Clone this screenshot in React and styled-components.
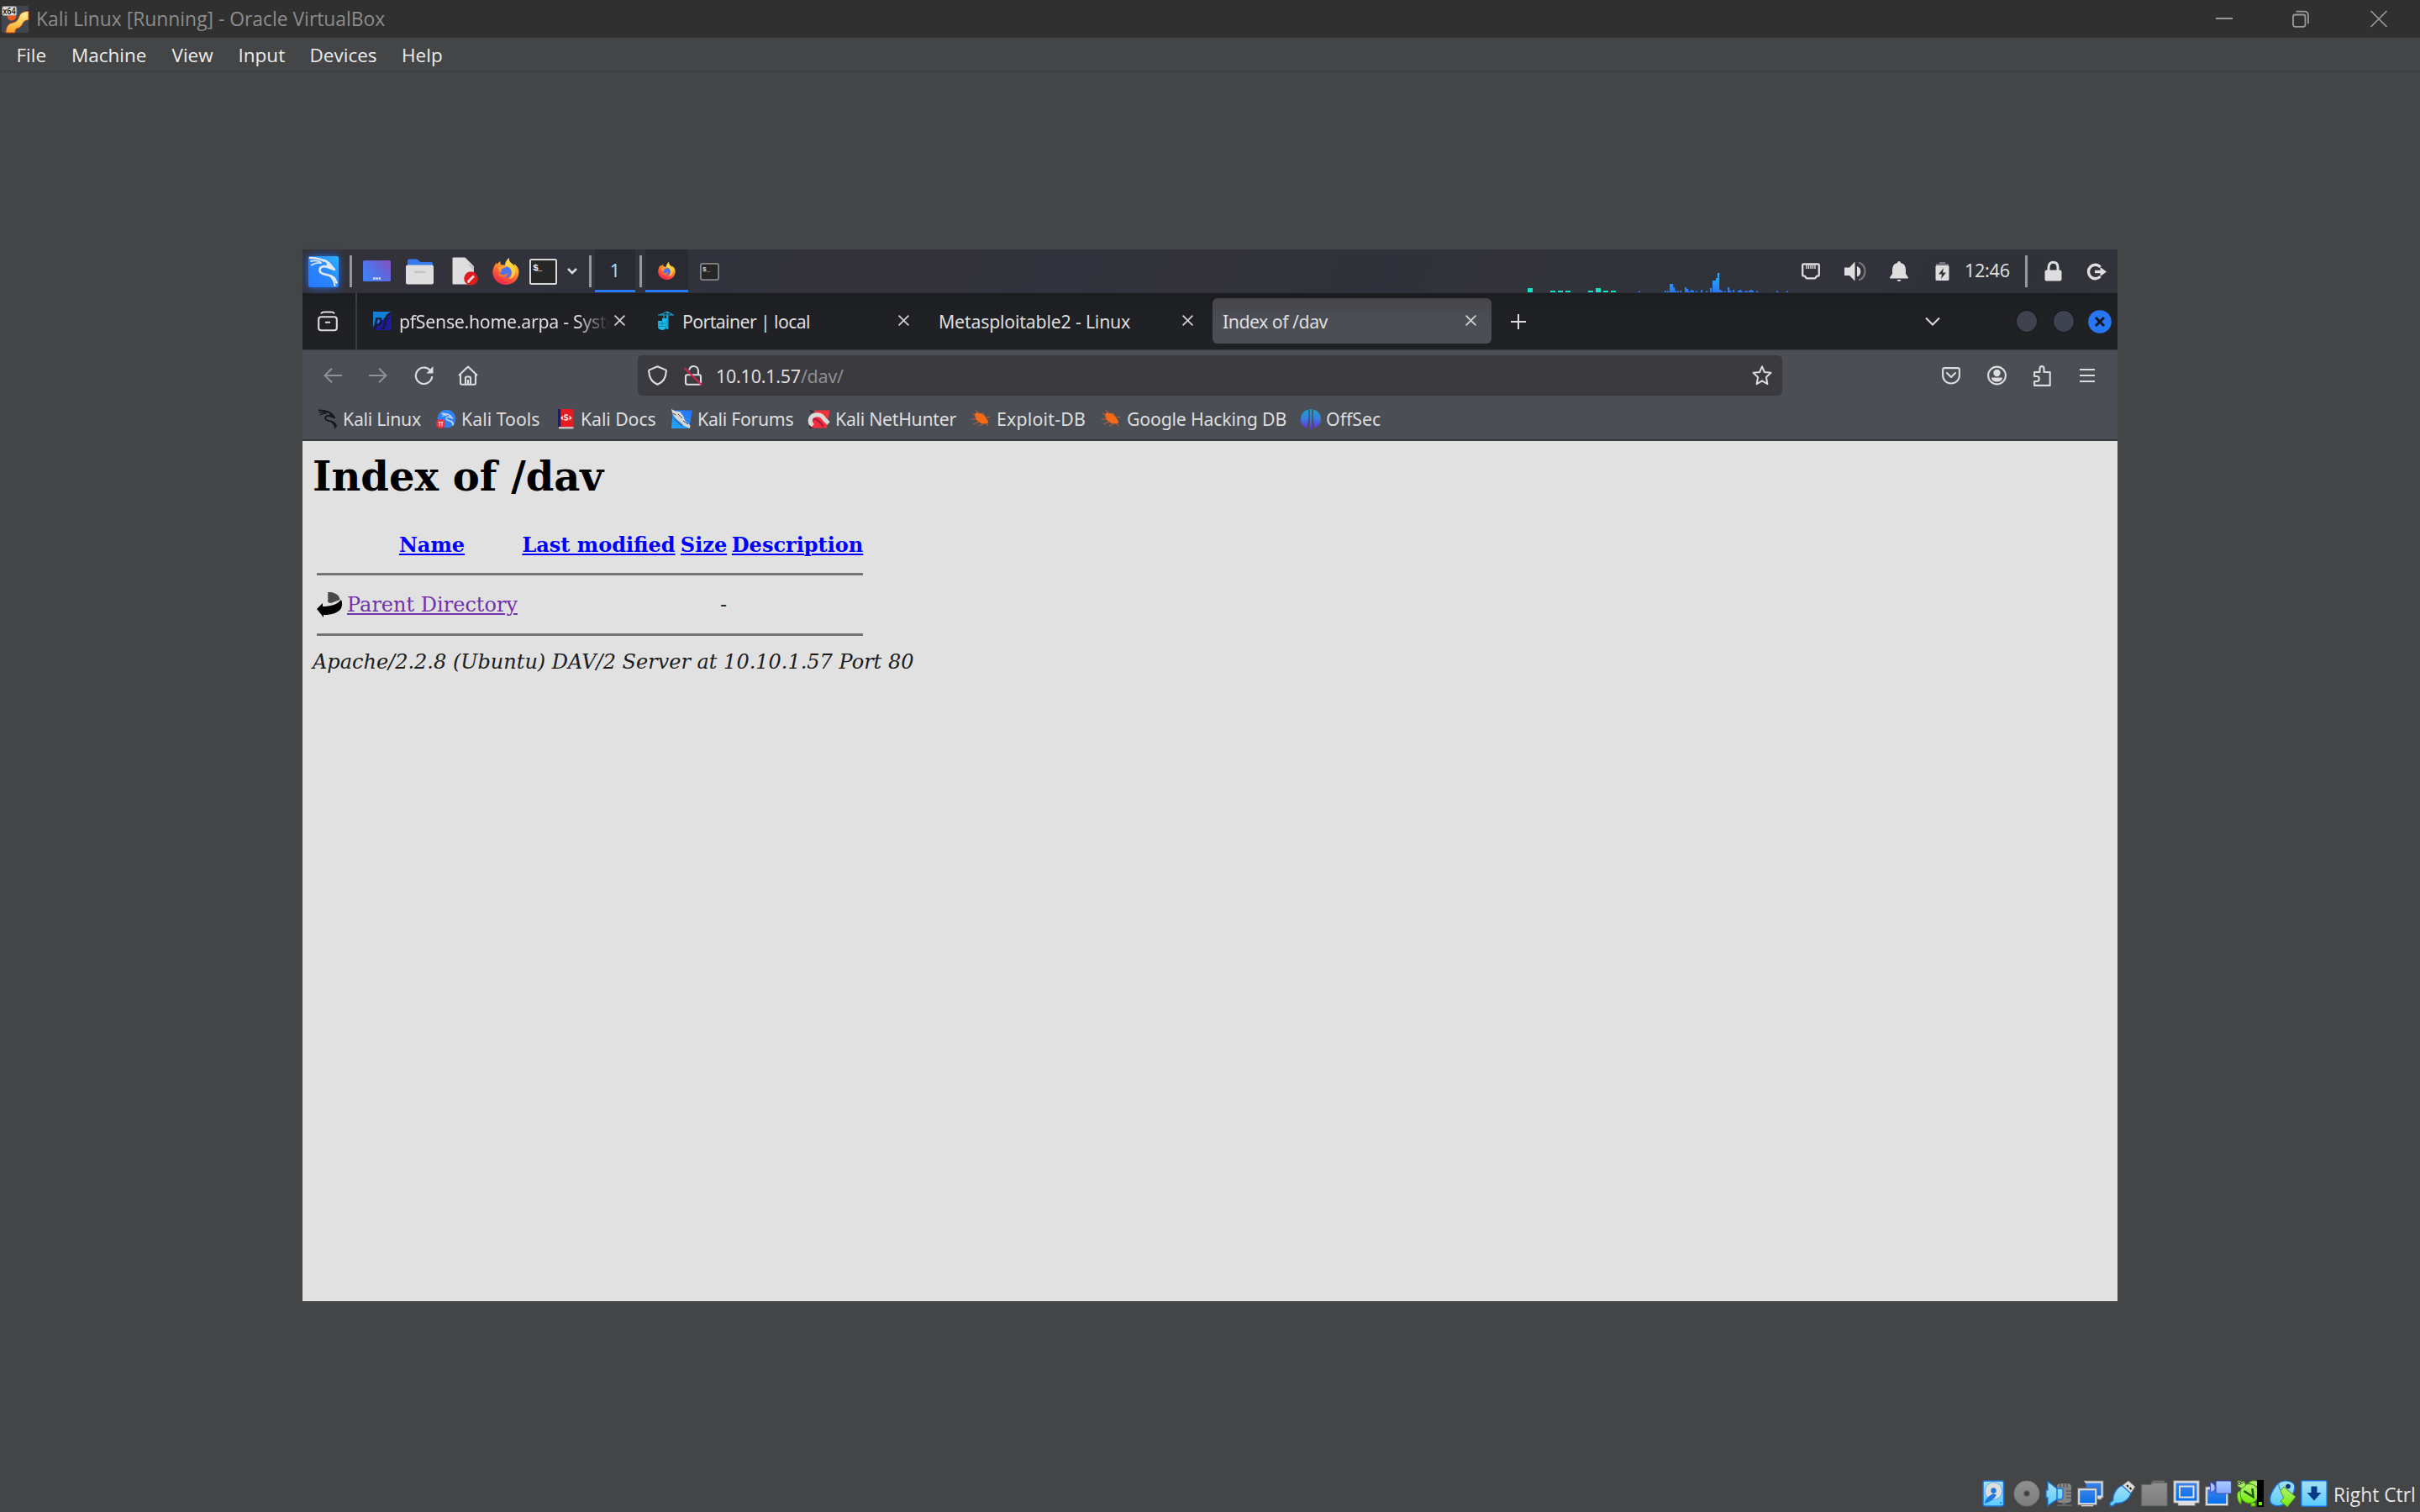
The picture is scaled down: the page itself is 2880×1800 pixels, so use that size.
import React from "react";
import styled, { createGlobalStyle } from "styled-components";

const GlobalStyle = createGlobalStyle`
  * { box-sizing: border-box; }
  html, body, #root { margin: 0; height: 100%; }
  body { background: #444546; overflow: hidden; }
  svg { display: block; overflow: visible; flex: none; }
`;

const hostFont = `"Open Sans", "Noto Sans", sans-serif`;
const guestFont = `"Noto Sans", "Open Sans", sans-serif`;

const Desktop = styled.div`
  width: 2880px;
  height: 1800px;
  display: flex;
  flex-direction: column;
  background: #444546;
`;

const Item = styled.div`
  flex: none;
  display: flex;
  align-items: center;
  width: ${(p) => p.$w}px;
  margin-left: ${(p) => p.$gap || 0}px;
`;
const Spacer = styled.div`
  flex: 1;
`;

/* ---------- host window ---------- */
const TitleBar = styled.header`
  height: 45px;
  flex: none;
  display: flex;
  align-items: center;
  padding: 0 39px 0 2px;
  background: #303030;
`;
const TitleText = styled.span`
  margin-left: 9px;
  font: 22.85px/47px ${hostFont};
  color: #8c8c8c;
  white-space: nowrap;
`;
const MenuBar = styled.nav`
  height: 41px;
  flex: none;
  display: flex;
  padding-left: 19.5px;
  border-bottom: 2px solid #3e3f40;
`;
const MenuEntry = styled.span`
  flex: none;
  width: ${(p) => p.$w}px;
  font: 22.5px/42px ${hostFont};
  color: #ececec;
  white-space: nowrap;
`;
const Stage = styled.main`
  flex: 1;
  display: flex;
  justify-content: center;
  align-items: flex-start;
  padding-top: 211px;
`;
const StatusBar = styled.footer`
  height: 44px;
  flex: none;
  display: flex;
  align-items: center;
  justify-content: flex-end;
  gap: 6px;
  padding: 0 3px 0 0;
`;
const HostKey = styled.span`
  width: 101px;
  padding: 4px 0 0 1px;
  font: 22.8px/44px ${hostFont};
  color: #e6e6e6;
  white-space: nowrap;
`;

/* ---------- guest screen ---------- */
const Guest = styled.section`
  width: 2160px;
  height: 1252px;
  display: flex;
  flex-direction: column;
  background: #e1e1e1;
  font-family: ${guestFont};
  color: #dcdcdc;
`;
const Panel = styled.div`
  height: 52px;
  flex: none;
  display: flex;
  align-items: center;
  padding: 0 13px 0 7px;
  background: linear-gradient(115deg, #33323a 0%, #32323b 9%, #2f333b 22%, #33323b 28%, #33323b 36%, #2f333b 42%, #33323b 49%, #2f323a 60%, #33323b 66%, #2f333a 76%, #32323b 84%, #2f3239 92%, #32323a 100%);
`;
const Separator = styled.i`
  flex: none;
  width: 3px;
  height: 38px;
  margin-left: ${(p) => p.$gap}px;
  background: #98989b;
`;
const Task = styled.div`
  flex: none;
  width: ${(p) => p.$w}px;
  height: 52px;
  margin-left: 4.5px;
  display: flex;
  align-items: center;
  justify-content: center;
  padding-bottom: 1px;
  background: #2a2b32;
  border-bottom: 1px solid #303138;
  box-shadow: inset 0 -3px 0 #2b7bf5;
  color: #a9d5f5;
  font: 21.5px/48px ${guestFont};
`;
const Clock = styled.span`
  flex: none;
  width: 54px;
  margin-left: 18px;
  font: 21.6px/48px ${guestFont};
  letter-spacing: -0.3px;
  padding-bottom: 3px;
  color: #dedede;
  white-space: nowrap;
`;

const TabStrip = styled.div`
  height: 68px;
  flex: none;
  display: flex;
  align-items: center;
  padding: 0 7px 0 18px;
  background: linear-gradient(#1c1d20, #202125 45%);
  border-bottom: 1px solid #3c3e44;
`;
const StripDivider = styled.i`
  flex: none;
  align-self: stretch;
  width: 2px;
  margin-left: 20.5px;
  background: #3d3e42;
`;
const Tab = styled.div`
  flex: none;
  display: flex;
  align-items: center;
  width: 332px;
  height: 54px;
  margin: 0 0 2px ${(p) => p.$gap}px;
  padding: 0 18px 0 ${(p) => p.$pad}px;
  border-radius: 6px;
  background: ${(p) => (p.$active ? "linear-gradient(#454549, #4c4e56 50%)" : "transparent")};
`;
const TabLabel = styled.span`
  flex: 1;
  min-width: 0;
  overflow: hidden;
  margin-left: ${(p) => p.$gap || 0}px;
  padding-top: 2px;
  font-size: 21.3px;
  line-height: 40px;
  letter-spacing: ${(p) => p.$track || 0}px;
  white-space: nowrap;
  color: #dedede;
  ${(p) => p.$fade && "mask-image: linear-gradient(90deg, #000 83%, transparent 98%);"}
`;
const WindowDot = styled.i`
  flex: none;
  width: 24px;
  height: 25px;
  margin-left: ${(p) => p.$gap}px;
  border-radius: 50%;
  background: #3f4350;
  box-shadow: 0 0 0 1px #17181b;
`;

const NavBar = styled.div`
  height: 60px;
  flex: none;
  display: flex;
  align-items: center;
  padding: 0 27px 0 25px;
  background: #4c4e56;
`;
const UrlField = styled.div`
  flex: none;
  display: flex;
  align-items: center;
  width: 1362px;
  height: 48px;
  margin-left: 190px;
  padding: 0 12px 0 12px;
  border-radius: 6px;
  background: #3a3a3f;
`;
const Url = styled.span`
  flex: 1;
  margin-left: 16px;
  padding-top: 1px;
  font-size: 21.5px;
  line-height: 48px;
  letter-spacing: -0.25px;
  color: #dedede;
`;
const UrlPath = styled.span`
  color: #8f8f92;
`;

const BookmarkBar = styled.div`
  height: 48px;
  flex: none;
  display: flex;
  align-items: center;
  padding: 0 0 2px 18px;
  background: #4c4e56;
  border-bottom: 2px solid #36373c;
`;
const Bookmark = styled.div`
  flex: none;
  display: flex;
  align-items: center;
  gap: 6px;
  width: ${(p) => p.$w}px;
  font-size: 21.3px;
  line-height: 40px;
  letter-spacing: ${(p) => p.$track || 0}px;
  white-space: nowrap;
  color: #dedede;
`;

/* ---------- page ---------- */
const Page = styled.article`
  flex: 1;
  padding: 13.5px 12px;
  font: 24px/28px "DejaVu Serif", serif;
  color: #000;
`;
const Heading = styled.h1`
  margin: 0;
  font-size: 48px;
  line-height: 56px;
  font-weight: bold;
`;
const Listing = styled.div`
  width: 650px;
  margin: 36px 0 0 5px;
`;
const Row = styled.div`
  display: grid;
  grid-template-columns: 30px 202px 183px 55px 156px;
  column-gap: 6px;
  align-items: center;
  height: ${(p) => p.$h}px;
  padding-top: ${(p) => p.$top || 0}px;
`;
const HeadCell = styled.a`
  grid-column: ${(p) => p.$col};
  justify-self: center;
  font-weight: bold;
  white-space: nowrap;
  color: #0000ff;
  text-decoration: underline;
`;
const Visited = styled.a`
  color: #7230ad;
  white-space: nowrap;
  text-decoration: underline;
`;
const SizeCell = styled.span`
  grid-column: 4;
  justify-self: end;
  color: #222;
`;
const Rule = styled.hr`
  height: 3px;
  margin: ${(p) => p.$gap || 0}px 0 0;
  border: 0;
  background: linear-gradient(#8b8b8b, #6b6b6b 40%, #757575);
`;
const Address = styled.address`
  margin-top: 17px;
  font-style: italic;
  color: #1c1c1c;
  white-space: nowrap;
`;

/* ---------- drawings ---------- */
const line = "#dcdcdc";
const S = ({ w, h, vb, children, ...r }) => (
  <svg width={w} height={h} viewBox={vb || `0 0 ${w} ${h}`} fill="none" {...r}>{children}</svg>
);

const VBoxLogo = () => (
  <S w={32} h={32}>
    <defs><linearGradient id="vb" x1="0" y1="0" x2="0" y2="1"><stop stopColor="#fff0a8" /><stop offset=".5" stopColor="#ffcf5c" /><stop offset="1" stopColor="#f99b2a" /></linearGradient></defs>
    <rect width="32" height="32" rx="1" fill="#404650" />
    <circle cx="12" cy="12" r="5.5" fill="#f0571a" />
    <path d="M5 32c0-7 3-11 8-12 5-1 6-3 8-8 2-4 5-5.500 11-5.500V17c-5 0-6 2-8 6-2 3-4 3.500-6 4-1.500.5-2 2-2 5z" fill="url(#vb)" stroke="#c8400f" strokeWidth="1" />
    <rect x=".7" y=".7" width="17" height="10.800" rx="2" fill="#dcdcdc" stroke="#8f8f8f" strokeWidth=".7" />
    <text x="1.300" y="9.800" fontSize="10" fontFamily="Open Sans, sans-serif" fontWeight="600" fill="#111" textLength="15.500" lengthAdjust="spacingAndGlyphs">x64</text>
  </S>
);
const WinMin = () => <S w={20} h={20}><path d="M0 9h20" stroke="#9a9a9a" strokeWidth="2" /></S>;
const WinRestore = () => (
  <S w={20} h={20} stroke="#9a9a9a" strokeWidth="1.800">
    <rect x="1" y="4.500" width="14.500" height="14.300" rx="2.500" />
    <path d="M4.500.7h9.500c3.500 0 5 1.500 5 5v9.500" />
  </S>
);
const WinClose = () => <S w={20} h={20}><path d="M.5 0l19 19M19.500 0l-19 19" stroke="#9a9a9a" strokeWidth="1.700" /></S>;

const Dragon = ({ c, sw = 2.6 }) => (
  <g stroke={c} strokeWidth={sw} strokeLinecap="round" strokeLinejoin="round" fill="none">
    <path d="M2 2c6 0 12 1 16 3.500" /><path d="M3 6c4-1 8-.5 11 .5M4 10.500c3-2 7-3 11-2.500" strokeWidth={sw * 0.7} />
    <path d="M17 4.500c6 1 9 5 14 11.500l-8-3c-5-2-9-.5-9.500 3C13 21 19 21.500 24 22.500c5 1 8 4 9.500 9" />
    <path d="M25 23c4 3 6 7 6.500 12" strokeWidth={sw * 0.8} />
    <path d="M22 8.500l9 7-8-2.500z" fill={c} strokeWidth={sw * 0.4} />
  </g>
);
const LogoGlow = styled(S)`
  filter: drop-shadow(0 0 5px #1a6cf0);
`;
const KaliLogo = () => (
  <LogoGlow w={36} h={37}>
    <defs><linearGradient id="kl" x1="0" y1="1" x2="1" y2="0"><stop stopColor="#2777ff" /><stop offset=".5" stopColor="#2a86ff" /><stop offset="1" stopColor="#2bb4ff" /></linearGradient></defs>
    <rect width="36" height="37" rx="2" fill="url(#kl)" />
    <Dragon c="#e4e8ee" />
  </LogoGlow>
);
const DesktopIcon = () => (
  <S w={33} h={26}>
    <defs><linearGradient id="dk" x1="0" y1=".7" x2="1" y2="0"><stop stopColor="#3f80f8" /><stop offset=".55" stopColor="#5f68dc" /><stop offset="1" stopColor="#8a4fbc" /></linearGradient></defs>
    <rect width="33" height="25" rx="1.500" fill="url(#dk)" />
    <path d="M12 21.500h2.500M15.300 21.500h2.500M18.600 21.500h2.500" stroke="#dde" strokeWidth="2.500" />
  </S>
);
const FolderIcon = () => (
  <S w={33} h={31}>
    <path d="M2 2.500C2 1 3 .5 4 .5h9c2 0 3 3.500 5 3.500h12c1 0 2 .5 2 2v6H2z" fill="#3579ea" />
    <rect y="7.500" width="33" height="23" rx="2" fill="#dedede" />
    <rect x="9.500" y="14.500" width="14" height="2.500" rx="1" fill="#c4c4c4" />
  </S>
);
const EditorIcon = () => (
  <S w={31} h={34}>
    <path d="M1.500.5h14L26 11v21.500H1.500C.8 32.500.5 32 .5 31.500v-30c0-.6.4-1 1-1z" fill="#dedede" />
    <path d="M18 7.500L26 11v6z" fill="#c2c2c2" />
    <circle cx="22.500" cy="25.500" r="8.300" fill="#e01b1f" />
    <path d="M19 29.500l7-7" stroke="#f0dada" strokeWidth="3" /><path d="M18.500 30.200l2-.5" stroke="#fff" strokeWidth="1.500" />
  </S>
);
const FirefoxIcon = ({ size = 32, id }) => (
  <S w={size} h={size} vb="0 0 32 32">
    <defs>
      <linearGradient id={id} x1=".8" y1="0" x2=".3" y2="1"><stop stopColor="#ffe94a" /><stop offset=".35" stopColor="#ffa928" /><stop offset=".65" stopColor="#ff5a38" /><stop offset="1" stopColor="#f0204f" /></linearGradient>
    </defs>
    <path d="M20 0c-.5 4 1 5 3.500 7 1 .8 2 1.500 2.700 2.500.2-.7 0-1.700-.2-2.500C31 11 32 15 31.300 19 30 27 24 32 16 32S.5 26 .3 17.500C.2 13 2 9 5 5.500c0 1 .2 1.600.6 2.200C7 6 8 5 9.500 4c-.2 2 .2 3.500 1 4.500 1.500 0 3-.3 4.500.3C15.500 5 17 2 20 0z" fill={`url(#${id})`} />
    <path d="M20 0c-.5 4 1 5 3.500 7 4 3.500 5 8 3 13-1 3-4 5-7 5 5-4 4-10 0-12-2-1.200-4-2-4.500-4C15.500 5 17 2 20 0z" fill="#ffd94a" opacity=".8" />
    <circle cx="16" cy="17" r="6.800" fill="#4c74f0" />
    <path d="M10.500 8.500c3 .2 5 .8 6 2-1.500 1.500-3.500 1.500-5 2.500-1.500 1.200-.5 3-1.500 4.500-2-1-4-3.500-3.500-6z" fill="#ff9a30" />
    <path d="M7 16c2 4 5 5 8 3.500 2-.8 3-1.500 4-1.200-1.500 3.500-4 6-8 5-3-1-4.500-4-4-7.300z" fill="#ff6e33" />
  </S>
);
const TerminalIcon = () => (
  <S w={33} h={31}>
    <rect x="1" y="1" width="31" height="29" rx="1.500" fill="#262626" stroke="#d8d8d8" strokeWidth="2" />
    <text x="4" y="14" fontFamily="Liberation Mono, monospace" fontWeight="bold" fontSize="11.500" fill="#f0f0f0" textLength="11.500">$_</text>
  </S>
);
const TerminalSmall = () => (
  <S w={23} h={21}>
    <rect x=".9" y=".9" width="21.200" height="19.200" rx="2" fill="#262626" stroke="#858585" strokeWidth="1.800" />
    <text x="3" y="9.500" fontFamily="Liberation Mono, monospace" fontWeight="bold" fontSize="8" fill="#d0d0d0">$_</text>
  </S>
);
const teal = [[6, 5], [33, 2], [42, 2], [51, 2], [78, 2], [87, 5], [96, 2], [105, 2]];
const blue = [[138, 1.5], [169, 2], [172, 1.5], [175, 10], [177, 10], [179, 6], [181, 2], [184, 1.5], [187, 2], [193, 6], [195, 4], [197, 1.5], [200, 3], [202, 2], [206, 1.5], [212, 3], [218, 1.5], [223, 5], [226, 14], [228, 14], [230, 17], [232, 23], [234, 3], [236, 2], [240, 1.5], [244, 6], [246, 2], [250, 3], [256, 2], [258, 3], [260, 1.5], [264, 1.5], [266, 1.5], [269, 2], [271, 3], [273, 2], [278, 1.5], [302, 1.5], [314, 1.5]];
const Graph = () => (
  <S w={325} h={52}>
    <defs><linearGradient id="gr" gradientUnits="userSpaceOnUse" x1="0" y1="28" x2="0" y2="51"><stop stopColor="#22b4ff" /><stop offset="1" stopColor="#2b76f5" /></linearGradient></defs>
    {teal.map(([x, h]) => <rect key={x} x={x} y={51 - h} width="6" height={h} fill="#19e0c8" />)}
    {blue.map(([x, h]) => <rect key={x} x={x} y={51 - h} width="2.200" height={h} fill="url(#gr)" />)}
  </S>
);
const Ethernet = () => (
  <S w={22} h={20}>
    <path d="M2.500 1.300h17c.8 0 1.300.5 1.300 1.300v11.800c0 .8-.4 1.200-1.300 1.200h-1c-.8 0-1 .4-1.300 1.200-.3 1-.8 1.500-1.700 1.500h-9c-1 0-1.400-.5-1.700-1.500-.3-.8-.6-1.200-1.300-1.200h-1c-.9 0-1.300-.4-1.300-1.200V2.600c0-.8.5-1.300 1.300-1.300z" stroke="#dedede" strokeWidth="2.300" />
    <path d="M6 2v5M8.500 2v5M11 2v5M13.500 2v5M16 2v5" stroke="#dedede" strokeWidth="1.400" />
  </S>
);
const Volume = () => (
  <S w={26} h={24}>
    <path d="M0 7.500h6L12.500.5v23L6 17H0z" fill="#dedede" />
    <path d="M15 6a6 6.500 0 0 1 0 12.500z" fill="#dedede" />
    <path d="M17 1.500c4.500 1 7.500 5.500 7.500 10.500S21.500 21.500 17 22.500" stroke="#74747a" strokeWidth="2.300" />
  </S>
);
const Bell = () => (
  <S w={22} h={24}>
    <path d="M11 0c1.200 0 2 .8 2 2 4 .8 6 4 6 8.500V15l2.800 4v1.500H.2V19L3 15v-4.500C3 6 5 2.800 9 2c0-1.200.8-2 2-2zM8.500 22h5c-.5 1.300-1.300 2-2.500 2s-2-.7-2.500-2z" fill="#dedede" />
  </S>
);
const Battery = () => (
  <S w={17} h={22}>
    <path d="M5 0h7v2h4v4H1V2h4z" fill="#74747a" />
    <rect x=".5" y="4" width="16" height="18" rx="1.500" fill="#dedede" />
    <path d="M10 7l-6 7.500h4L7 20l6-7.500H9z" fill="#2f3239" />
  </S>
);
const LockIcon = () => (
  <S w={21} h={24}>
    <path d="M5 11V7.500C5 3.500 7 1.300 10.500 1.300S16 3.500 16 7.500V11" stroke="#dedede" strokeWidth="3" />
    <rect x=".5" y="10.500" width="20" height="13" rx="2" fill="#dedede" />
  </S>
);
const Logout = () => (
  <S w={23} h={21}>
    <path d="M15.500 5A8 8.300 0 1 0 15.500 16" stroke="#dedede" strokeWidth="3.400" />
    <path d="M9 8.800h6.500V5L23 10.500 15.500 16v-3.700H9z" fill="#dedede" />
  </S>
);

const FirefoxView = () => (
  <S w={24} h={24}>
    <rect x="1.200" y="6.300" width="21.600" height="16" rx="3" stroke={line} strokeWidth="2.100" />
    <path d="M4 2.300C5 1 6 .6 7.500.6h9c1.500 0 2.500.4 3.500 1.700M9 12.700h6" stroke={line} strokeWidth="2" />
  </S>
);
const PfIcon = () => (
  <S w={22} h={22}>
    <path d="M0 0h22C16 2 16 6 14 10L0 18z" fill="#1380d8" />
    <path d="M22 2v20H2c3-1 2-6 4-8z" fill="#1e1b96" />
    <text x="1" y="17" fontFamily="Open Sans, sans-serif" fontWeight="bold" fontStyle="italic" fontSize="18" fill="#151a3c">pf</text>
  </S>
);
const PortainerIcon = () => (
  <S w={20} h={22}>
    <path d="M1 4h19M3 4l9-4M12 0v6M8 3v6M12 0l7 4" stroke="#15a9d2" strokeWidth="1.200" />
    <path d="M11 5h2.500v16H11z" fill="#13a5d0" />
    <path d="M1 11h5V8h5v11c-2 4-8 3.500-10 0z" fill="#16bdeb" />
    <path d="M1 14h10M1 17.500h10M6 11v6" stroke="#12769a" strokeWidth=".8" />
  </S>
);
const TabClose = () => <S w={13} h={13}><path d="M.6.6l11.800 11.800M12.400.6L.6 12.400" stroke="#cfcfcf" strokeWidth="1.800" /></S>;
const Plus = () => <S w={18} h={18}><path d="M9 0v18M0 9h18" stroke={line} strokeWidth="2" /></S>;
const Chevron = () => <S w={18} h={10}><path d="M1 .5l8 8 8-8" stroke={line} strokeWidth="2" /></S>;
const PanelChevron = () => <S w={12} h={8}><path d="M1 1l5 5 5-5" stroke={line} strokeWidth="2.500" /></S>;
const WindowClose = () => (
  <S w={28} h={28}><circle cx="14" cy="14" r="13.800" fill="#2777f5" /><path d="M9 9l10 10M19 9L9 19" stroke="#14171f" strokeWidth="3" /></S>
);

const Arrow = ({ flip }) => (
  <S w={22} h={18}><path d={flip ? "M0 9h20.500M12 .7L20.500 9 12 17.300" : "M22 9H1.500M10 .7L1.500 9l8.500 8.300"} stroke="#909195" strokeWidth="2" /></S>
);
const Reload = () => (
  <S w={23} h={22}>
    <path d="M20 6.500A9.700 9.700 0 1 0 21.200 12" stroke={line} strokeWidth="2.200" />
    <path d="M22.500 0v8.500h-8z" fill={line} />
  </S>
);
const Home = () => (
  <S w={24} h={24} stroke={line} strokeWidth="2.100" strokeLinejoin="round">
    <path d="M1 12L12 1.500 23 12" /><path d="M3 10.500V21c0 1 .6 1.700 1.700 1.700h14.600c1.100 0 1.700-.7 1.700-1.700V10.500" /><path d="M9 22.500V15c0-1 .6-1.500 1.500-1.500h3c.9 0 1.500.5 1.500 1.500v7.500M12 17v5.500" />
  </S>
);
const Shield = () => (
  <S w={23} h={24}><path d="M11.500 1.200l9.700 4.200c.5.3.7.7.7 1.200C21.500 14 18.500 20 11.500 22.800 4.500 20 1.500 14 1.100 6.600c0-.5.2-.9.7-1.200z" stroke={line} strokeWidth="2.100" strokeLinejoin="round" /></S>
);
const Insecure = () => (
  <S w={22} h={24}>
    <rect x="2" y="11.300" width="18" height="11.500" rx="2" stroke={line} strokeWidth="2.100" />
    <path d="M6 5.500C7 2.500 9 1 11.500 1 15 1 17 3.500 17 6.500V11" stroke={line} strokeWidth="2.100" />
    <path d="M.5 3l21 20.500" stroke="#d8204a" strokeWidth="2" />
  </S>
);
const Star = () => (
  <S w={24} h={24}><path d="M12 1.300l2.900 6.700 7.600.8-5.600 5.100 1.500 8.300L12 18.300l-6.400 3.900 1.500-8.300L1.500 8.800l7.600-.8z" stroke={line} strokeWidth="2" strokeLinejoin="round" /></S>
);
const Pocket = () => (
  <S w={22} h={21} stroke={line} strokeWidth="2.100" strokeLinejoin="round"><path d="M3 1.100h16c1.200 0 1.900.7 1.900 1.900v6.500c0 6-4.400 10-9.900 10s-9.900-4-9.900-10V3C1.100 1.800 1.800 1.100 3 1.100z" /><path d="M6 7l5 5 5-5" strokeLinecap="round" /></S>
);
const Account = () => (
  <S w={23} h={24}><circle cx="11.500" cy="12" r="10.400" stroke={line} strokeWidth="2.100" /><circle cx="11.500" cy="9" r="4.200" fill={line} /><path d="M5 14.500h13c0 3-3 5-6.500 5S5 17.500 5 14.500z" fill={line} /></S>
);
const Extension = () => (
  <S w={21} h={25}><path d="M1.100 12V8h6.400V4C7.500 2 8.700 1.100 10 1.100S12.500 2 12.500 4v4h7.200v15.900H1.100V19H4c1.700 0 2.800-1.300 2.800-3S5.700 13 4 13H1.100z" stroke={line} strokeWidth="2.100" strokeLinejoin="round" /></S>
);
const Burger = () => <S w={18} h={16}><path d="M0 1h18M0 8h18M0 15h18" stroke={line} strokeWidth="2" /></S>;

const BmLinux = () => <S w={24} h={24} vb="0 0 36 37"><Dragon c="#151619" sw={2.8} /></S>;
const BmTools = () => (
  <S w={24} h={24}><circle cx="12.500" cy="11.500" r="10.800" fill="#2f80f5" /><g transform="translate(6 4) scale(.44)"><Dragon c="#b5d2f5" sw={3.4} /></g><circle cx="5.500" cy="17.500" r="5.500" fill="#e8303c" /><path d="M2.500 15.500h6M4.300 15.500v5M6.900 15.500v5" stroke="#f4dcdc" strokeWidth="1.200" /></S>
);
const BmDocs = () => (
  <S w={22} h={24}><rect x="1" y="0" width="18.500" height="22" rx="1" fill="#e51c1f" /><rect x="1" width="3.200" height="21" fill="#1d1d5e" /><path d="M2 22.300h17.500" stroke="#cfcfcf" strokeWidth="2.200" /><path d="M7 8.500l-1.800 2L7 12.500M14.500 8.500l2 2-2 2M13 7.500c-2-1-4.500-.5-4.300 1.200.3 1.300 4 1 4 2.800 0 1.600-3 2-4.500.5" stroke="#f2e4e4" strokeWidth="1.700" /></S>
);
const BmForums = () => (
  <S w={25} h={24}><defs><linearGradient id="fo" x1="0" y1="1" x2="1" y2="0"><stop stopColor="#22a8ff" /><stop offset="1" stopColor="#2470f5" /></linearGradient></defs><path d="M2 1.500h23L21 23H0z" fill="url(#fo)" /><path d="M0 0l5 2.500 5 .5 4 5 2.500 6 6 5.500-.5 3.500-7-3-4-4-5-4-4.500-6z" fill="#d8d8d8" /><path d="M1.500 5l4 2M8 6l5 5M3 11l5 5 5 4M14 14l6 4" stroke="#3f4450" strokeWidth="1" /></S>
);
const BmNet = () => (
  <S w={25} h={24}><path d="M7 1.500h17.500L21 22.500H1z" fill="#f2303c" /><path d="M4 20C-1 15 1 8.500 7 7c6-1.300 9 1 11 5l5 5" stroke="#dadada" strokeWidth="5" /><path d="M5 13c3-3 8 2 12 8" stroke="#b01a3a" strokeWidth="2.500" /><path d="M0 0l6 3-4 2zM0 19l5 4H0z" fill="#3a2a32" /></S>
);
const BmExploit = () => (
  <S w={24} h={24}><path d="M3.500 6.500l3-2.500 6 1.500 4.500 4 3.500 6-2 2-7-.5-5.500-4z" fill="#f56a16" /><path d="M5 1l4 5M1 5l5 3M0 12l7 0M2 18l8-3M9 20l6-3M13 4l4 6M18 10l5-1M18 17l2 3" stroke="#c9612b" strokeWidth="1" /></S>
);
const BmOffsec = () => (
  <S w={24} h={24}><defs><linearGradient id="os" gradientUnits="userSpaceOnUse" x1="0" y1="0" x2="0" y2="24"><stop stopColor="#18a6cf" /><stop offset=".5" stopColor="#3a7be0" /><stop offset="1" stopColor="#6a28e0" /></linearGradient></defs><path d="M9 .5C3 2 0 7 0 12s3 9 7 10.500c2-5 2.800-15 2-22zM15 .5c6 1.500 9 6.500 9 11.500s-3 9-7 10.500c-2-5-2.800-15-2-22z" fill="url(#os)" /><path d="M10.800 0h2.400v24h-2.400z" fill="url(#os)" /></S>
);
const BackIcon = () => (
  <S w={30} h={30}>
    <path d="M13 0h4c6 1 10 4 10.500 9L17 13c-3 0-4-1-4-3z" fill="#4a4a4a" /><path d="M13 1v9" stroke="#e1e1e1" strokeDasharray="1.500 1.500" />
    <path d="M0 20l7-7v4c9 0 17-2 22-8l1 3c1 8-4 12-12 14-4 1-8 1-10 1v3z" fill="#000" />
  </S>
);

/* status bar indicators */
const blueFill = "url(#sb)";
const cyanFill = "url(#sc)";
const Defs = () => (
  <defs>
    <linearGradient id="sb" x1="0" y1="0" x2="0" y2="1"><stop stopColor="#3b82e4" /><stop offset="1" stopColor="#0570ee" /></linearGradient>
    <linearGradient id="sc" x1="0" y1="0" x2="0" y2="1"><stop stopColor="#a5e0f2" /><stop offset="1" stopColor="#59ccfd" /></linearGradient>
    <linearGradient id="sg" x1="0" y1="0" x2="0" y2="1"><stop stopColor="#8f908f" /><stop offset="1" stopColor="#7c7d7c" /></linearGradient>
    <linearGradient id="sl" x1="0" y1="0" x2="0" y2="1"><stop stopColor="#b4ef72" /><stop offset="1" stopColor="#73ee0a" /></linearGradient>
    <linearGradient id="sp" x1="0" y1="0" x2="0" y2="1"><stop stopColor="#a8ccff" /><stop offset="1" stopColor="#8aa6ff" /></linearGradient>
  </defs>
);
const HardDisk = () => (
  <S w={32} h={32}><Defs /><rect x="2" y="1" width="24.500" height="30" rx="2" fill={cyanFill} stroke="#1a71d6" strokeWidth="1.500" /><circle cx="14.500" cy="13" r="10.300" fill="#dedede" stroke="#3b82d8" strokeWidth=".6" /><circle cx="14.500" cy="12.500" r="3.200" fill="#2176d6" /><path d="M4 28c0-4 3-8 10-12l4 1.500c-2 4-6 8-14 10.500z" fill="#1f78dc" /><circle cx="23" cy="27" r="1" fill="#1a71d6" /></S>
);
const Optical = () => (
  <S w={32} h={32}><circle cx="16" cy="16" r="15" fill="url(#sg)" stroke="#777" strokeWidth="1" /><circle cx="16" cy="16" r="3.400" fill="#3c3d3e" stroke="#6c6c6c" strokeWidth="1.200" /></S>
);
const Audio = () => (
  <S w={32} h={32}><rect x="14" y="4" width="17" height="23" rx="4" fill="#858685" /><path d="M18 4v5M22 4v5M26 4v5M25 13h6M25 17h6M25 21h6" stroke="#5b5c5c" strokeWidth="1.500" /><path d="M20 27h5v2h7v2H14v-2h6z" fill="#646565" /><path d="M3 1.500L14 10h5l2 1v10l-2 2h-5L3 30.500V21H1v-9h2z" fill={cyanFill} stroke="#1a71d6" strokeWidth="1.300" /><path d="M14 10v13" stroke="#1a71d6" strokeWidth="1.500" /></S>
);
const Network = () => (
  <S w={32} h={32}><path d="M8 1h23v20h-2v2h-4" fill="#dedede" stroke="#7d7d7d" strokeWidth="1" /><rect x="10.500" y="3.500" width="18" height="15" fill={blueFill} /><rect x=".7" y="9.700" width="23" height="20" fill="#dedede" stroke="#6d6d6d" strokeWidth="1" /><rect x="3.200" y="12.200" width="18" height="15" fill={blueFill} /><path d="M5 30h14v1.300H5z" fill="#dedede" /></S>
);
const Usb = () => (
  <S w={32} h={32}><path d="M15 7L23 .8 31 8l-6 9z" fill="#dedede" stroke="#7b7b7b" strokeWidth="1" /><path d="M21 6l2 2M24.500 9l2 2" stroke="#222" strokeWidth="2" /><path d="M15.500 6.500L26 16c-3 8-10 12-18 11.500L4 31l-3-1 0-3 4-3c-1-7 4-15 10.500-17.500z" fill={cyanFill} stroke="#1a71d6" strokeWidth="1.300" /></S>
);
const SharedFolder = () => (
  <S w={32} h={32}><path d="M11 5l3-4.500h14V5z" fill="#6c6d6d" /><path d="M.7 5.500h11l3-2H31V30.500H.7z" fill="url(#sg)" stroke="#6a6b6b" strokeWidth="1" /></S>
);
const Display = () => (
  <S w={32} h={32}><path d="M.7.7h30.600v26.600h-5V30.500H6v-3.200H.7z" fill="#dedede" stroke="#7b7b7b" strokeWidth="1" /><rect x="3.500" y="3.500" width="25" height="21" fill={blueFill} /><rect x="8" y="7.500" width="16.500" height="13" stroke="#dedede" strokeWidth="2" /></S>
);
const Recording = () => (
  <S w={32} h={32}><path d="M.7 8h27v22.500H.7z" fill="#dedede" stroke="#7b7b7b" strokeWidth="1" /><rect x="3.200" y="11" width="22" height="17" fill={blueFill} /><rect x="13" y="1" width="18.500" height="15" rx="1" fill="url(#sp)" stroke="#3d4ab8" strokeWidth="1.200" /><path d="M6.500 2.500l2.500 1 3 3v5l-3 2.500-2.500.5z" fill="#9fc0ff" stroke="#3d4ab8" strokeWidth="1" /></S>
);
const Turtle = () => (
  <S w={32} h={32}><path d="M14 3c4-3 9-2.500 12-1l-2 6zM3 13c3 0 3 2 2.500 5L5 29c-4-3-5-9-4-14zM17 27h5v4h-5z" fill="url(#sl)" stroke="#4a9a12" strokeWidth="1" /><ellipse cx="15" cy="16" rx="11" ry="11.500" fill="url(#sl)" stroke="#4a9a12" strokeWidth="1" /><path d="M1 1h7l3 5-5 4-5-3z" fill="#a5e86a" stroke="#4a9a12" strokeWidth="1" /><circle cx="3" cy="4" r="1.500" fill="#fff" stroke="#111" strokeWidth=".8" /><circle cx="6" cy="2.500" r="1.300" fill="#fff" stroke="#111" strokeWidth=".8" /><path d="M8.500 13l11 7-1-10" stroke="#1d5a0e" strokeWidth="2.600" /><rect x="24" y="0" width="8" height="32" fill="#000" /><rect x="26" y="26" width="4" height="4" fill="#6bef0a" /></S>
);
const Mouse = () => (
  <S w={32} h={32}><path d="M16 1.500C22 0 29 2 30.500 6c1.500 6-3 15-9 20-6 6-15 6-19 1-3-6 2-15 6-20 2-3 4-4.500 7.500-5.500z" fill={cyanFill} stroke="#1a71d6" strokeWidth="1.300" /><path d="M12 3c-1 7 3 12 9 14" stroke="#1a71d6" strokeWidth="1" /><circle cx="23" cy="7.500" r="2.800" fill="#0d2f78" /><path d="M14 13l4-5 14 12-10 12-8-7 4-4z" fill="url(#sl)" stroke="#4a9a12" strokeWidth="1" /></S>
);
const KeyDown = () => (
  <S w={32} h={32}><rect x=".8" y=".8" width="30.400" height="30.400" rx="1.500" fill={cyanFill} stroke="#1a71d6" strokeWidth="1.500" /><path d="M12.500 7.500h7V15h5L16 24.500 7.500 15h5z" fill="#083a8c" /></S>
);

const statusIcons = [HardDisk, Optical, Audio, Network, Usb, SharedFolder, Display, Recording, Turtle, Mouse, KeyDown];
const menus = [["File", 65.5], ["Machine", 119.5], ["View", 79], ["Input", 85], ["Devices", 109.5], ["Help", 60]];
const bookmarks = [
  ["Kali Linux", BmLinux, 141, -0.3], ["Kali Tools", BmTools, 144, 0], ["Kali Docs", BmDocs, 136, -0.1],
  ["Kali Forums", BmForums, 164, -0.3], ["Kali NetHunter", BmNet, 193, -0.3], ["Exploit-DB", BmExploit, 155, 0.2],
  ["Google Hacking DB", BmExploit, 237, -0.2], ["OffSec", BmOffsec, 100, 0],
];

export default function App() {
  return (
    <Desktop>
      <GlobalStyle />
      <TitleBar>
        <VBoxLogo />
        <TitleText>Kali Linux [Running] - Oracle VirtualBox</TitleText>
        <Spacer />
        <Item $w={20}><WinMin /></Item>
        <Item $w={20} $gap={71}><WinRestore /></Item>
        <Item $w={20} $gap={73}><WinClose /></Item>
      </TitleBar>
      <MenuBar>{menus.map(([m, w]) => <MenuEntry key={m} $w={w}>{m}</MenuEntry>)}</MenuBar>
      <Stage>
        <Guest>
          <Panel>
            <Item $w={36}><KaliLogo /></Item>
            <Separator $gap={12.5} />
            <Item $w={33} $gap={13.5}><DesktopIcon /></Item>
            <Item $w={33} $gap={18}><FolderIcon /></Item>
            <Item $w={31} $gap={21.5}><EditorIcon /></Item>
            <Item $w={32} $gap={17}><FirefoxIcon id="ff1" /></Item>
            <Item $w={33} $gap={12}><TerminalIcon /></Item>
            <Item $w={12} $gap={12}><PanelChevron /></Item>
            <Separator $gap={14} />
            <Task $w={48}>1</Task>
            <Separator $gap={4.5} />
            <Task $w={51}><FirefoxIcon id="ff2" size={21} /></Task>
            <Item $w={23} $gap={14}><TerminalSmall /></Item>
            <Spacer />
            <Item $w={325}><Graph /></Item>
            <Item $w={22} $gap={7}><Ethernet /></Item>
            <Item $w={26} $gap={29}><Volume /></Item>
            <Item $w={22} $gap={28}><Bell /></Item>
            <Item $w={17} $gap={32}><Battery /></Item>
            <Clock>12:46</Clock>
            <Separator $gap={18} />
            <Item $w={21} $gap={20}><LockIcon /></Item>
            <Item $w={23} $gap={30}><Logout /></Item>
          </Panel>
          <TabStrip>
            <FirefoxView />
            <StripDivider />
            <Tab $gap={5.5} $pad={14}><PfIcon /><TabLabel $gap={9} $track={-0.28} $fade>pfSense.home.arpa - System</TabLabel><TabClose /></Tab>
            <Tab $gap={6} $pad={14}><PortainerIcon /><TabLabel $gap={10} $track={-0.62}>Portainer | local</TabLabel><TabClose /></Tab>
            <Tab $gap={6} $pad={11}><TabLabel $track={-0.2}>Metasploitable2 - Linux</TabLabel><TabClose /></Tab>
            <Tab $gap={5} $pad={12} $active><TabLabel $track={-0.5}>Index of /dav</TabLabel><TabClose /></Tab>
            <Item $w={18} $gap={23}><Plus /></Item>
            <Spacer />
            <Chevron />
            <WindowDot $gap={91} />
            <WindowDot $gap={20} />
            <Item $w={28} $gap={17.5}><WindowClose /></Item>
          </TabStrip>
          <NavBar>
            <Item $w={22}><Arrow /></Item>
            <Item $w={22} $gap={32}><Arrow flip /></Item>
            <Item $w={23} $gap={32}><Reload /></Item>
            <Item $w={24} $gap={29}><Home /></Item>
            <UrlField>
              <Shield />
              <Item $w={22} $gap={20}><Insecure /></Item>
              <Url>10.10.1.57<UrlPath>/dav/</UrlPath></Url>
              <Star />
            </UrlField>
            <Spacer />
            <Item $w={22}><Pocket /></Item>
            <Item $w={23} $gap={32}><Account /></Item>
            <Item $w={21} $gap={32}><Extension /></Item>
            <Item $w={18} $gap={34}><Burger /></Item>
          </NavBar>
          <BookmarkBar>
            {bookmarks.map(([t, Icon, w, track]) => <Bookmark key={t} $w={w} $track={track}><Icon />{t}</Bookmark>)}
          </BookmarkBar>
          <Page>
            <Heading>Index of /dav</Heading>
            <Listing>
              <Row $h={36}>
                <HeadCell $col={2}>Name</HeadCell>
                <HeadCell $col={3}>Last modified</HeadCell>
                <HeadCell $col={4}>Size</HeadCell>
                <HeadCell $col={5}>Description</HeadCell>
              </Row>
              <Rule $gap={15} />
              <Row $h={69} $top={2}>
                <BackIcon />
                <Visited>Parent Directory</Visited>
                <SizeCell>-</SizeCell>
              </Row>
              <Rule />
            </Listing>
            <Address>Apache/2.2.8 (Ubuntu) DAV/2 Server at 10.10.1.57 Port 80</Address>
          </Page>
        </Guest>
      </Stage>
      <StatusBar>
        {statusIcons.map((Icon, i) => <Icon key={i} />)}
        <HostKey>Right Ctrl</HostKey>
      </StatusBar>
    </Desktop>
  );
}
